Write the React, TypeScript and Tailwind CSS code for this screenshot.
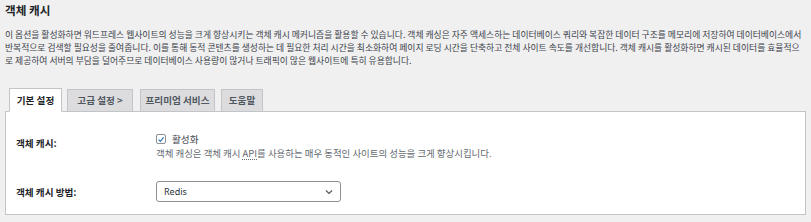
import React from "react";

const font = { fontFamily: '"Noto Sans CJK KR", "Noto Sans", sans-serif' };

export default function App() {
  return (
    <div
      className="w-[811px] h-[222px] overflow-hidden bg-[#f0f0f1] px-[5px] text-[#3c434a]"
      style={font}
    >
      <h1 className="pt-[2px] text-[11.6px] leading-[16px] font-bold text-[#1d2327]">객체 캐시</h1>
      <p className="mt-[10px] text-[8.8px] leading-[13px] w-[801px] break-all">
        이 옵션을 활성화하면 워드프레스 웹사이트의 성능을 크게 향상시키는 객체 캐시 메커니즘을 활용할 수 있습니다. 객체 캐싱은 자주 액세스하는 데이터베이스 쿼리와 복잡한 데이터 구조를 메모리에 저장하여 데이터베이스에서 반복적으로 검색할 필요성을 줄여줍니다. 이를 통해 동적 콘텐츠를 생성하는 데 필요한 처리 시간을 최소화하여 페이지 로딩 시간을 단축하고 전체 사이트 속도를 개선합니다. 객체 캐시를 활성화하면 캐시된 데이터를 효율적으로 제공하여 서버의 부담을 덜어주므로 데이터베이스 사용량이 많거나 트래픽이 많은 웹사이트에 특히 유용합니다.
      </p>
      <div className="mt-[21px] flex items-end pl-[4px] gap-[5px] relative z-10">
        <div className="h-[24px] w-[53px] flex items-center justify-center bg-white border border-[#c3c4c7] border-b-white text-[9.6px] font-bold text-[#1d2327]">
          기본 설정
        </div>
        <div className="h-[23px] w-[66px] flex items-center justify-center bg-[#dcdcde] border border-[#c3c4c7] text-[9.6px] font-bold text-[#50575e]">
          고급 설정 &gt;
        </div>
        <div className="h-[23px] w-[75px] ml-[2px] flex items-center justify-center bg-[#dcdcde] border border-[#c3c4c7] text-[9.6px] font-bold text-[#50575e]">
          프리미엄 서비스
        </div>
        <div className="h-[23px] w-[42px] ml-[1px] flex items-center justify-center bg-[#dcdcde] border border-[#c3c4c7] text-[9.6px] font-bold text-[#50575e]">
          도움말
        </div>
      </div>
      <div className="-mt-px h-[104px] bg-white border border-[#c3c4c7] px-[10px] pt-[21px]">
        <div className="flex">
          <div className="w-[140px] pt-[4px] text-[9.6px] leading-[13px] font-bold text-[#1d2327]">객체 캐시:</div>
          <div className="flex flex-col">
            <div className="flex items-center h-[12px] gap-[6px]">
              <span className="w-[10px] h-[10px] border border-[#8c8f94] rounded-[2px] flex items-center justify-center bg-white">
                <svg width="9" height="9" viewBox="0 0 10 10">
                  <path d="M2 5.2 L4.2 7.4 L8.2 2.4" fill="none" stroke="#2271b1" strokeWidth="1.4" />
                </svg>
              </span>
              <span className="text-[9.6px] text-[#3c434a]">활성화</span>
            </div>
            <div className="mt-[2px] text-[9.45px] leading-[13px] text-[#646970]">
              객체 캐싱은 객체 캐시 <span className="underline decoration-dotted underline-offset-2">API</span>를 사용하는 매우 동적인 사이트의 성능을 크게 향상시킵니다.
            </div>
          </div>
        </div>
        <div className="flex mt-[21px] items-center">
          <div className="w-[140px] pt-[2px] text-[9.6px] leading-[13px] font-bold text-[#1d2327]">객체 캐시 방법:</div>
          <div className="w-[185px] h-[21px] border border-[#8c8f94] rounded-[3px] flex items-center justify-between pl-[7px] pr-[6px] bg-white">
            <span className="text-[9px] text-[#2c3338]" style={{ fontFamily: '"Noto Sans", sans-serif' }}>Redis</span>
            <svg width="10" height="10" viewBox="0 0 10 10">
              <path d="M2 3.5 L5 6.5 L8 3.5" fill="none" stroke="#50575e" strokeWidth="1.2" />
            </svg>
          </div>
        </div>
      </div>
    </div>
  );
}
